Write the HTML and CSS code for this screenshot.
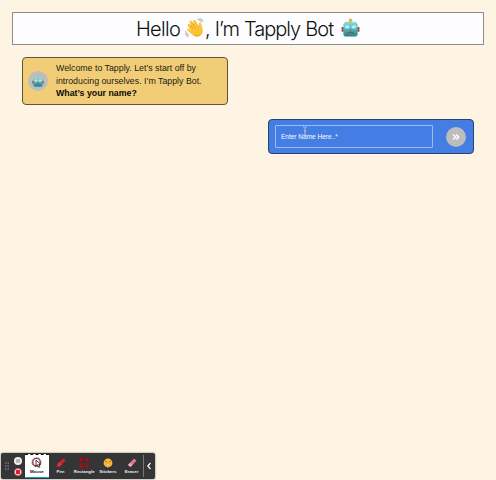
FILE: index.html
```
<!DOCTYPE html>
<html lang="en">
<head>
<meta charset="utf-8">
<title>Tapply Bot</title>
<link rel="stylesheet" href="styles.css">
</head>
<body>
<svg width="0" height="0" class="defs" aria-hidden="true">
  <defs><linearGradient id="teal" x2="0" y2="1"><stop stop-color="#8bdde0"/><stop offset=".5" stop-color="#55b3b8"/><stop offset="1" stop-color="#158890"/></linearGradient></defs>
  <symbol id="robot" viewBox="0 0 20 20">
    <path d="M9 2h2v3H9z" fill="#b98a4a"/><circle cx="10" cy="2.4" r="1.9" fill="#f3b52b"/>
    <path d="M.6 9.5h2.4v5H.6zM17 9.5h2.4v5H17z" fill="#a64048"/>
    <path d="M4.5 4h11l2 2.5v11q-1 2-2.5 2H5q-1.500 0-2.500-2v-11z" fill="url(#teal)"/>
    <ellipse cx="6.5" cy="9.500" rx="2.500" ry="1.800" fill="#b5eeea"/><ellipse cx="13.500" cy="9.500" rx="2.500" ry="1.800" fill="#b5eeea"/>
    <path d="M9 13.500l1-2 1 2z" fill="#b05a61"/><path d="M6 16.500q4-3 8 0" stroke="#96505a" stroke-width="1.300" fill="none"/>
  </symbol>
</svg>
<header class="banner">
  <h1><span class="hello">Hello</span><svg class="wave" viewBox="0 0 20 20"><path d="M4 10L2.700 6.700q.2-1.300 1.500-.7L7 9 4.500 3.500q.2-1.500 1.800-.7L10 8 8.200 2.600q.4-1.600 1.800-.4l3.700 6.100.4-3q.8-1.600 2 .1l1.500 6.200q1 4.500-2.800 6.400-4 2-7.200-1L2 12q-.6-1.600.8-1.500l4 2.300z" fill="#fbc232"/><path d="M4.200 7l4 5.500M5.800 4l4.500 6.500M9.300 3.500l3.700 6" fill="none" stroke="#fbc232" stroke-width="2.600"/><path d="M5 7l3 3.500M7.700 5.700l2.500 3.500M9 17q3 1.500 5.500 0" fill="none" stroke="#e39325" stroke-width=".7"/><path d="M12.500 1.200q3 .3 3.500 3M14.500.4q3 .8 3.400 3.500M.5 13q.4 3 3.500 4M.2 15.500q1 3 3.400 3.200" fill="none" stroke="#8f8f8f" stroke-width=".8"/></svg><span class="intro">, I’m Tapply Bot</span><svg class="bot"><use href="#robot"/></svg></h1>
</header>
<main>
  <section class="message">
    <div class="avatar"><svg><use href="#robot"/></svg></div>
    <p><span>Welcome to Tapply. Let’s start off by</span><span>introducing ourselves. I’m Tapply Bot.</span><b>What’s your name?</b></p>
  </section>
  <form class="reply">
    <div class="field">Enter Name Here..*<svg class="cursor" viewBox="0 0 6 10"><path d="M1 .7q1.500 0 2 1 .5-1 2-1M3 1.700v6.600M1 9.300q1.500 0 2-1 .5 1 2 1M2 5h2" fill="none" stroke="#c4cbd5" stroke-width=".9"/></svg></div>
    <div class="send"><svg viewBox="0 0 20 20"><path d="M7.200 7.500l2.300 2.500-2.300 2.500M10.300 7.500l2.300 2.500-2.300 2.500" fill="none" stroke="#fff" stroke-width="1.500"/></svg></div>
  </form>
</main>
<nav class="toolbar">
  <svg class="grip" viewBox="0 0 4 8"><path d="M0 1h4M0 4h4M0 7h4" stroke="#92979a" stroke-width="1" stroke-dasharray="1.500 1"/></svg>
  <div class="record">
    <svg viewBox="0 0 8 8"><circle cx="4" cy="4" r="4" fill="#eee"/><path d="M3 2.300v3.400M5 2.300v3.400" stroke="#777"/></svg>
    <svg viewBox="0 0 8 8"><circle cx="4" cy="4" r="3.600" fill="#f3dfe1" stroke="#d9505f" stroke-width=".8"/><path d="M2 2h4v4H2z" fill="#d91e38"/></svg>
  </div>
  <div class="tool active"><svg viewBox="0 0 12 12"><circle cx="5.500" cy="5.200" r="3.700" fill="none" stroke="#ac2835" stroke-width="1.200"/><circle cx="5.500" cy="5.200" r="4.500" fill="none" stroke="#111" stroke-width=".7" stroke-dasharray="1.500 1"/><path d="M5 3.200v6l1.500-1.400 1.200 2.600 1.300-.6-1.200-2.500h2z" fill="#fff" stroke="#111" stroke-width=".8"/></svg><span>Mouse</span></div>
  <div class="tool"><svg viewBox="0 0 12 12"><path d="M2 10l.5-3.200 2-2L7.200 7 5 9.200z" fill="#f02b39"/><path d="M5 4.500L8.500 1.500l2 2L7.200 7z" fill="#d9202c"/></svg><span>Pen</span></div>
  <div class="tool"><svg viewBox="0 0 12 12"><path d="M2.500 2.500h7v7h-7z" fill="none" stroke="#a90916" stroke-width="1.500"/><path d="M1.500 1.500h2v2h-2zM8.500 1.500h2v2h-2zM1.500 8.500h2v2h-2zM8.500 8.500h2v2h-2z" fill="#b70b19"/></svg><span>Rectangle</span></div>
  <div class="tool"><svg viewBox="0 0 12 12"><circle cx="6" cy="6" r="4.400" fill="#f7bd36"/><path d="M3 5q1-1.500 2.200 0M6.800 5Q8 3.500 9 5" stroke="#b9562b" stroke-width=".8" fill="none"/><path d="M4 7h4q-.5 2-2 2T4 7" fill="#fff0c2" stroke="#d36b47" stroke-width=".5"/></svg><span>Stickers</span></div>
  <div class="tool"><svg viewBox="0 0 12 12"><path d="M2 8l6-6.500 2.500 2.300-6 6.200z" fill="#d9798f"/><path d="M2 8l2-2.200L6.500 8l-2 2z" fill="#efabb9"/></svg><span>Eraser</span></div>
  <div class="collapse"><svg viewBox="0 0 6 8"><path d="M4.500 1L1.800 4l2.700 3" fill="none" stroke="#fff" stroke-width="1.200"/></svg></div>
</nav>
</body>
</html>
```
FILE: styles.css
```
* { box-sizing: border-box; }
html, body { height: 100%; }
body { margin: 0; padding: 12px 12px 1px 12px; background: #fdf4e3; font-family: "Liberation Sans", sans-serif; display: flex; flex-direction: column; overflow: hidden; }
svg { display: block; flex: none; }
.defs { position: absolute; }
.banner { width: 472px; height: 33px; flex: none; border: 1px solid #8d8d8b; background: #fdfdff; }
h1 { margin: 0; height: 31px; padding-left: 123px; display: flex; align-items: center; font: 300 20px/32px Inter, sans-serif; color: #111; white-space: nowrap; }
.hello { width: 49px; letter-spacing: -.7px; }
.wave { width: 20px; height: 20px; margin-top: -2px; }
.intro { width: 136px; letter-spacing: -1px; word-spacing: .5px; }
.bot { width: 19px; height: 19px; margin-top: -2px; }
main { flex: 1; padding: 12px 10px 0; display: flex; flex-direction: column; }
.message { width: 206px; height: 48px; border: 1px solid #625336; border-radius: 4px; background: #f2cd77; display: flex; align-items: center; padding-left: 5px; gap: 8px; }
.avatar { width: 20px; height: 20px; border-radius: 50%; background: #bdbdbd; display: grid; place-items: center; flex: none; }
.avatar svg { width: 12px; height: 12px; }
.message p { margin: 0; font-size: 8.8px; line-height: 12.8px; color: #211b10; white-space: nowrap; }
.message p > * { display: block; }
.message b { color: #0c0a06; }
.reply { width: 206px; height: 35px; margin: 14px 0 0; align-self: flex-end; border: 1px solid #27436f; border-radius: 4px; background: #447de4; display: flex; align-items: center; padding: 0 7px 0 6px; justify-content: space-between; }
.field { position: relative; width: 158px; height: 23px; border: 1px solid #9dbcf4; border-radius: 1px; padding-left: 5px; font-size: 6.5px; line-height: 21px; color: #fff; white-space: nowrap; }
.cursor { position: absolute; left: 26px; top: 0; width: 6px; height: 10px; }
.send { width: 20px; height: 20px; border-radius: 50%; background: #bdbdbd; }
.toolbar { width: 154px; height: 26px; margin-left: -11px; flex: none; background: #343536; border-radius: 2px; display: flex; align-items: center; box-shadow: 0 0 2px #625d55; }
.grip { width: 4px; height: 8px; margin-left: 4px; }
.record { width: 8px; margin-left: 5px; display: grid; gap: 3px; }
.record svg { width: 8px; height: 8px; }
.tool { width: 23.7px; height: 24px; display: flex; flex-direction: column; align-items: center; padding-top: 3px; flex: none; color: #eee; font: bold 4.4px/5px "Liberation Sans", sans-serif; }
.tool svg { width: 12px; height: 12px; }
.record + .tool { margin-left: 3px; }
.tool.active { color: #111; background: #fff; border-top: 1px dashed #111; border-bottom: 1px solid #149bc9; padding-top: 2px; }
.collapse { height: 22px; width: 9px; border-left: 1px solid #777; display: grid; place-items: center end; }
.collapse svg { width: 6px; height: 8px; }
```
